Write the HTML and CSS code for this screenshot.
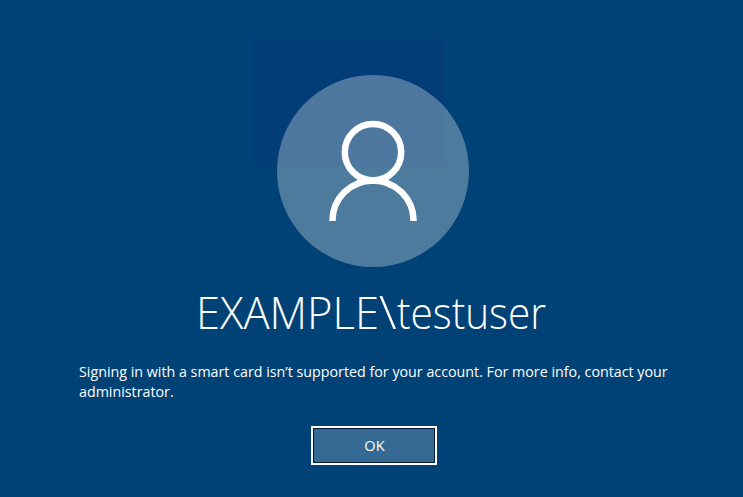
FILE: index.html
```
<!DOCTYPE html>
<html lang="en">
<head>
<meta charset="utf-8">
<title>Sign in</title>
<link rel="stylesheet" href="styles.css">
</head>
<body>
<main class="screen">
  <div class="glow"></div>
  <svg class="avatar" viewBox="0 0 192 192" aria-hidden="true">
    <circle class="disc" cx="96" cy="96" r="96"/>
    <g class="person">
      <circle cx="96" cy="77.2" r="28.2"/>
      <path d="M55.4 146a40.6 40.6 0 0 1 81.2 0"/>
    </g>
  </svg>
  <h1 class="user"><span class="domain">EXAMPLE</span><span class="slash">\</span><span class="name">testuser</span></h1>
  <p class="message">Signing in with a smart card isn’t supported for your account. For more info, contact your<br>administrator.</p>
  <button class="ok"><span>OK</span></button>
</main>
</body>
</html>
```
FILE: styles.css
```
* { box-sizing: border-box; }
body {
  margin: 0;
  background: #004275;
  color: #fff;
  font-family: "Open Sans", "Noto Sans", sans-serif;
}
.screen {
  position: relative;
  width: 743px;
  height: 497px;
  padding-top: 75px;
  display: flex;
  flex-direction: column;
  align-items: center;
  overflow: hidden;
}
.glow {
  position: absolute;
  left: 252px;
  top: 38px;
  width: 192px;
  height: 128px;
  background: #023d78;
}
.avatar {
  position: relative;
  width: 192px;
  height: 192px;
  flex: none;
  margin-left: 3px;
}
.disc { fill: #fff; fill-opacity: .3; }
.person { fill: none; stroke: #fff; stroke-width: 6.5; }
.user {
  display: flex;
  width: 351px;
  margin: 15px 0 0;
  height: 60px;
  line-height: 60px;
  font-size: 45px;
  font-weight: 300;
  white-space: nowrap;
}
.user span { display: block; flex: none; transform-origin: 0 46px; }
.domain { width: 183px; transform: scaleX(.967); }
.slash { width: 18px; transform: scale(1.15, 1.03); }
.name { width: 150px; transform: scaleX(.9); }
.message {
  width: 600px;
  margin: 19px 0 0;
  padding-left: 7px;
  font-size: 15px;
  line-height: 20px;
  white-space: nowrap;
  transform: scaleX(.951);
  transform-origin: 7px 0;
}
.ok {
  width: 126px;
  height: 39px;
  margin: 25px 0 0 5px;
  padding: 0 0 2px;
  border: 2px solid #fff;
  box-shadow: inset 0 0 0 1px #001a36;
  background: #346a93;
  color: #fff;
  font: 15px "Open Sans", "Noto Sans", sans-serif;
}
.ok span { display: inline-block; transform: scaleX(.97); }
```
